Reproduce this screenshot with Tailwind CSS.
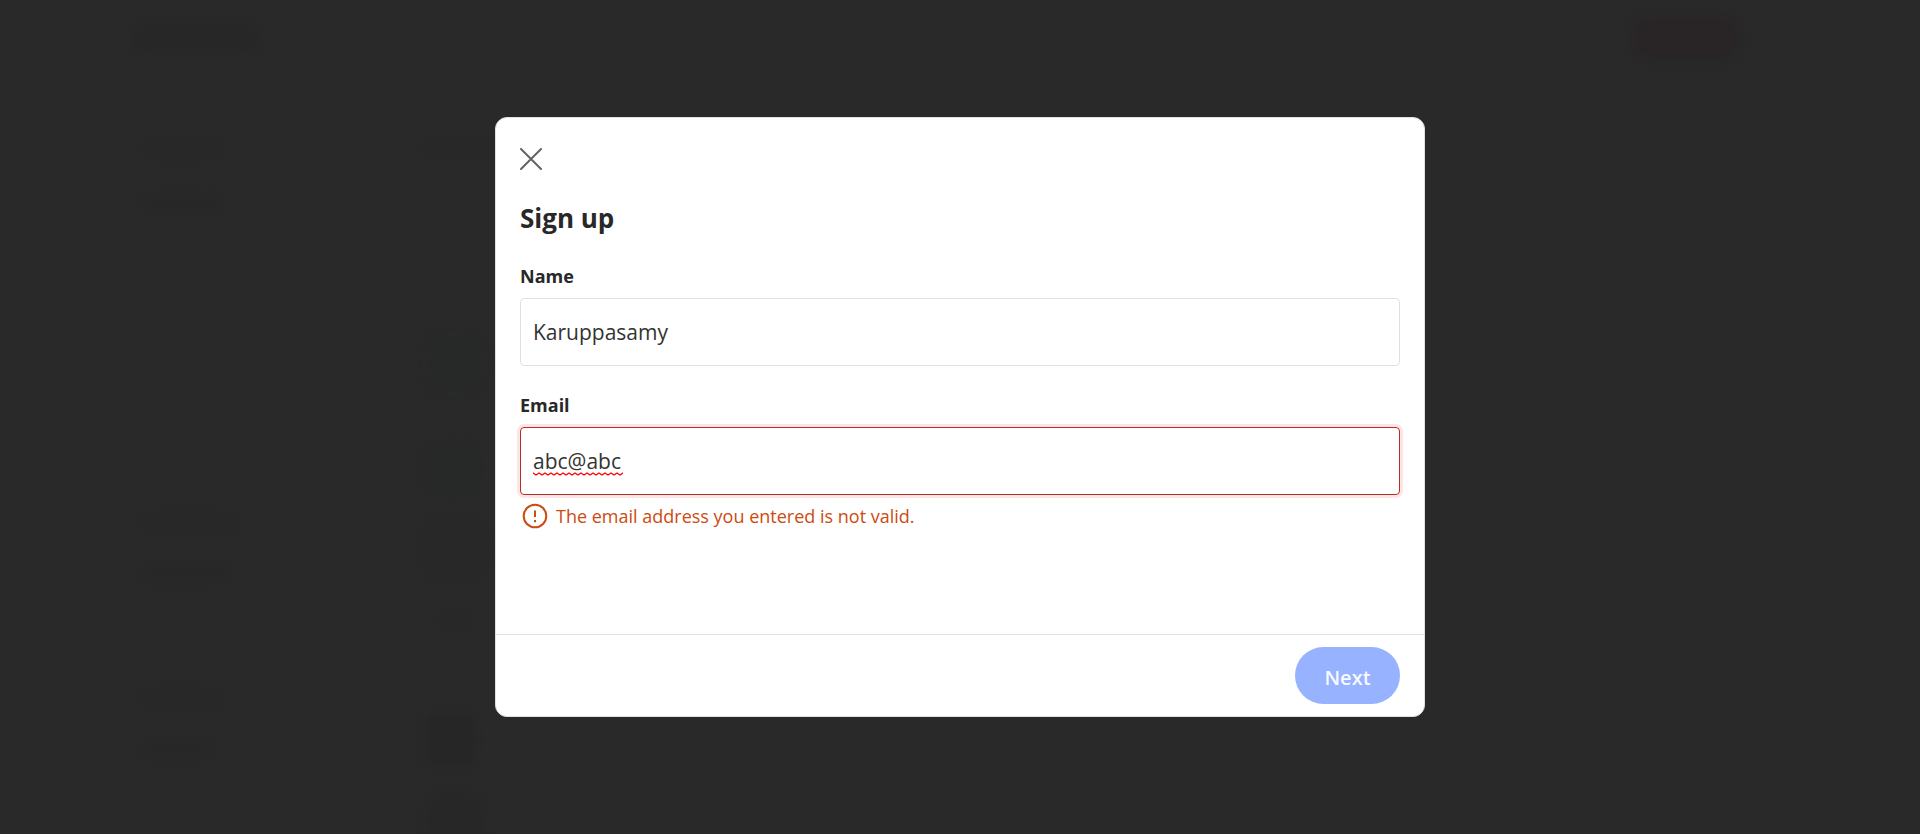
<!DOCTYPE html>
<html lang="en">
<head>
<meta charset="utf-8">
<meta name="viewport" content="width=device-width, initial-scale=1">
<title>Sign up</title>
<script src="https://cdn.jsdelivr.net/npm/@tailwindcss/browser@4"></script>
</head>
<body class="relative min-h-screen overflow-hidden bg-[#292929] font-['Open_Sans',sans-serif] text-[#282829]">

<!-- Dimmed page behind the dialog -->
<div class="absolute inset-0 overflow-hidden" aria-hidden="true">
  <div class="flex items-center justify-between pt-4 pl-[132px] pr-[180px]">
    <div class="h-6 w-32 rounded-full bg-[#272727] blur-xs"></div>
    <div class="h-11 w-27 rounded-full bg-[#292526] blur-xs"></div>
  </div>
  <div class="flex gap-50 pl-[147px] pt-21">
    <div class="flex w-20 flex-col gap-10">
      <div class="h-3 w-18 rounded-full bg-[#282828] blur-xs"></div>
      <div class="h-3 w-18 rounded-full bg-[#272727] blur-xs"></div>
      <div class="mt-67 h-3 w-22 rounded-full bg-[#282828] blur-xs"></div>
      <div class="h-3 w-20 rounded-full bg-[#272727] blur-xs"></div>
      <div class="mt-18 h-3 w-18 rounded-full bg-[#282828] blur-xs"></div>
      <div class="h-3 w-15 rounded-full bg-[#272727] blur-xs"></div>
    </div>
    <div class="flex flex-col">
      <div class="h-2 w-20 rounded-full bg-[#282828] blur-xs"></div>
      <div class="mt-46 size-14 rounded-2xl bg-[#272928] blur-xs"></div>
      <div class="mt-13 size-12 rounded-lg bg-[#272828] blur-xs"></div>
      <div class="mt-7 size-14 rounded-2xl bg-[#282828] blur-xs"></div>
      <div class="mt-10 ml-4 h-3 w-6 rounded-full bg-[#282828] blur-xs"></div>
      <div class="mt-22 size-12 rounded-lg bg-[#272627] blur-xs"></div>
      <div class="mt-7 size-14 rounded-full bg-[#272727] blur-xs"></div>
    </div>
  </div>
</div>

<div class="relative flex min-h-screen items-center justify-center p-4">
  <main role="dialog" aria-modal="true" aria-labelledby="title" class="w-full max-w-[930px] rounded-xl border border-[#dee0e1] bg-white">
    <form novalidate>
      <div class="px-6 pt-[30px] pb-[104px]">
        <button type="button" aria-label="Close" class="block">
          <svg class="size-[22px]" viewBox="0 0 22 22" fill="none" stroke="#636466" stroke-width="2" stroke-linecap="round"><path d="M1 1 21 21M21 1 1 21"/></svg>
        </button>
        <h1 id="title" class="mt-8 text-[26px] leading-8 font-bold">Sign up</h1>

        <label for="name" class="mt-7 block text-lg leading-7 font-bold">Name</label>
        <input id="name" type="text" value="Karuppasamy" class="mt-2 block h-[68px] w-full rounded border border-[#dee0e1] px-3 text-[21px] text-[#333] outline-none">

        <label for="email" class="mt-[25px] block text-lg leading-7 font-bold">Email</label>
        <div class="relative mt-2">
          <input id="email" type="text" inputmode="email" value="abc@abc" aria-invalid="true" aria-describedby="email-error" class="block h-[68px] w-full rounded border border-[#b92b27] px-3 text-[21px] text-[#333] ring-3 ring-[#fbe5e5] outline-none">
          <svg class="absolute top-[45px] left-[13px] h-1 w-[90px]" aria-hidden="true">
            <defs><pattern id="wave" width="6" height="4" patternUnits="userSpaceOnUse"><path d="M-1 .5 0 1 3 3 6 1 7 .5" fill="none" stroke="#f00" stroke-width="1.4"/></pattern></defs>
            <rect width="90" height="4" fill="url(#wave)"/>
          </svg>
        </div>
        <p id="email-error" class="mt-[7px] flex items-center gap-2 pl-0.5 text-lg leading-7 text-[#cb4b10]">
          <svg class="size-[26px] shrink-0" viewBox="0 0 26 26" fill="none" stroke="#cb4b10" stroke-width="2"><circle cx="13" cy="13" r="11.3"/><path d="M13 7.5v6.5M13 17v2.2"/></svg>
          The email address you entered is not valid.
        </p>
      </div>
      <div class="flex justify-end border-t border-[#dee0e1] px-6 py-3">
        <button type="submit" disabled class="h-[57px] w-[105px] rounded-full bg-[#97b2ff] pt-1 text-xl font-semibold text-white/95">Next</button>
      </div>
    </form>
  </main>
</div>
</body>
</html>
